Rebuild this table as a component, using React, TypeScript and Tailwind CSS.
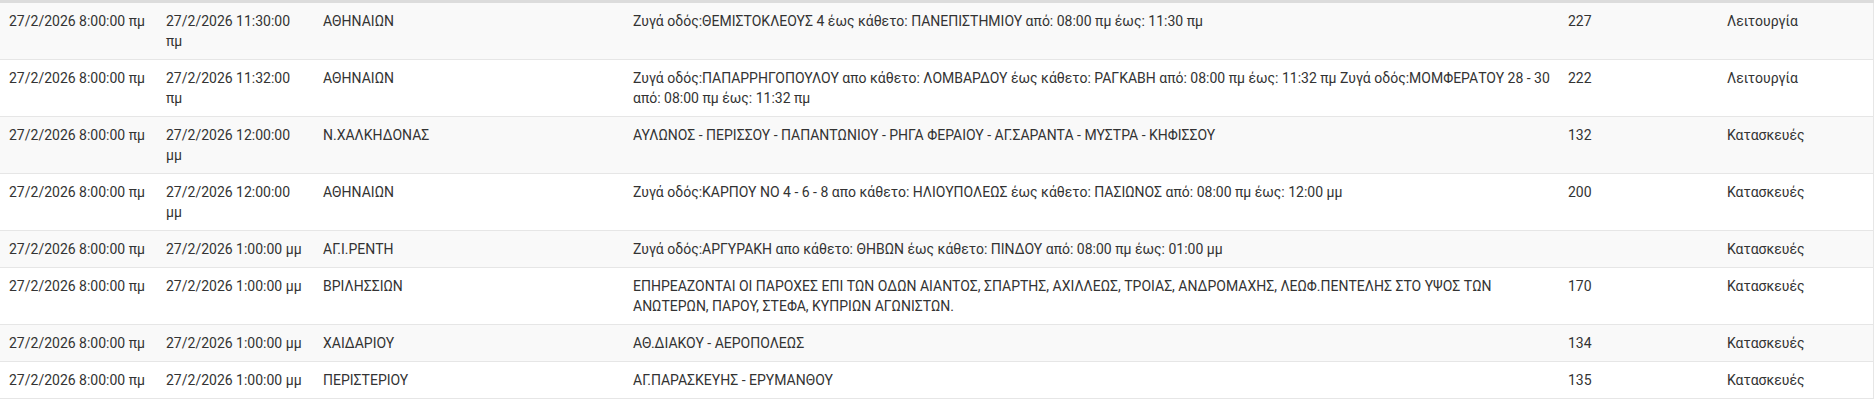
const rows = [
  {
    from: "27/2/2026 8:00:00 πμ",
    to: "27/2/2026 11:30:00 πμ",
    area: "ΑΘΗΝΑΙΩΝ",
    desc: "Ζυγά οδός:ΘΕΜΙΣΤΟΚΛΕΟΥΣ 4 έως κάθετο: ΠΑΝΕΠΙΣΤΗΜΙΟΥ από: 08:00 πμ έως: 11:30 πμ",
    num: "227",
    type: "Λειτουργία",
  },
  {
    from: "27/2/2026 8:00:00 πμ",
    to: "27/2/2026 11:32:00 πμ",
    area: "ΑΘΗΝΑΙΩΝ",
    desc: "Ζυγά οδός:ΠΑΠΑΡΡΗΓΟΠΟΥΛΟΥ απο κάθετο: ΛΟΜΒΑΡΔΟΥ έως κάθετο: ΡΑΓΚΑΒΗ από: 08:00 πμ έως: 11:32 πμ Ζυγά οδός:ΜΟΜΦΕΡΑΤΟΥ 28 - 30 από: 08:00 πμ έως: 11:32 πμ",
    num: "222",
    type: "Λειτουργία",
  },
  {
    from: "27/2/2026 8:00:00 πμ",
    to: "27/2/2026 12:00:00 μμ",
    area: "Ν.ΧΑΛΚΗΔΟΝΑΣ",
    desc: "ΑΥΛΩΝΟΣ - ΠΕΡΙΣΣΟΥ - ΠΑΠΑΝΤΩΝΙΟΥ - ΡΗΓΑ ΦΕΡΑΙΟΥ - ΑΓ.ΣΑΡΑΝΤΑ - ΜΥΣΤΡΑ - ΚΗΦΙΣΣΟΥ",
    num: "132",
    type: "Κατασκευές",
  },
  {
    from: "27/2/2026 8:00:00 πμ",
    to: "27/2/2026 12:00:00 μμ",
    area: "ΑΘΗΝΑΙΩΝ",
    desc: "Ζυγά οδός:ΚΑΡΠΟΥ ΝΟ 4 - 6 - 8 απο κάθετο: ΗΛΙΟΥΠΟΛΕΩΣ έως κάθετο: ΠΑΣΙΩΝΟΣ από: 08:00 πμ έως: 12:00 μμ",
    num: "200",
    type: "Κατασκευές",
  },
  {
    from: "27/2/2026 8:00:00 πμ",
    to: "27/2/2026 1:00:00 μμ",
    area: "ΑΓ.Ι.ΡΕΝΤΗ",
    desc: "Ζυγά οδός:ΑΡΓΥΡΑΚΗ απο κάθετο: ΘΗΒΩΝ έως κάθετο: ΠΙΝΔΟΥ από: 08:00 πμ έως: 01:00 μμ",
    num: "",
    type: "Κατασκευές",
  },
  {
    from: "27/2/2026 8:00:00 πμ",
    to: "27/2/2026 1:00:00 μμ",
    area: "ΒΡΙΛΗΣΣΙΩΝ",
    desc: "ΕΠΗΡΕΑΖΟΝΤΑΙ ΟΙ ΠΑΡΟΧΕΣ ΕΠΙ ΤΩΝ ΟΔΩΝ ΑΙΑΝΤΟΣ, ΣΠΑΡΤΗΣ, ΑΧΙΛΛΕΩΣ, ΤΡΟΙΑΣ, ΑΝΔΡΟΜΑΧΗΣ, ΛΕΩΦ.ΠΕΝΤΕΛΗΣ ΣΤΟ ΥΨΟΣ ΤΩΝ ΑΝΩΤΕΡΩΝ, ΠΑΡΟΥ, ΣΤΕΦΑ, ΚΥΠΡΙΩΝ ΑΓΩΝΙΣΤΩΝ.",
    num: "170",
    type: "Κατασκευές",
  },
  {
    from: "27/2/2026 8:00:00 πμ",
    to: "27/2/2026 1:00:00 μμ",
    area: "ΧΑΙΔΑΡΙΟΥ",
    desc: "ΑΘ.ΔΙΑΚΟΥ - ΑΕΡΟΠΟΛΕΩΣ",
    num: "134",
    type: "Κατασκευές",
  },
  {
    from: "27/2/2026 8:00:00 πμ",
    to: "27/2/2026 1:00:00 μμ",
    area: "ΠΕΡΙΣΤΕΡΙΟΥ",
    desc: "ΑΓ.ΠΑΡΑΣΚΕΥΗΣ - ΕΡΥΜΑΝΘΟΥ",
    num: "135",
    type: "Κατασκευές",
  },
];

export default function App() {
  return (
    <div className="w-[1875px] bg-white font-['Roboto',sans-serif] text-[14px] leading-5 text-[#333]">
      <table className="w-[1874px] table-fixed border-collapse border-t-[3px] border-r border-t-[#dcdcdc] border-r-[#e6e6e6]">
        <colgroup>
          <col className="w-[158px]" />
          <col className="w-[157px]" />
          <col className="w-[310px]" />
          <col className="w-[935px]" />
          <col className="w-[159px]" />
          <col />
        </colgroup>
        <tbody>
          {rows.map((r, i) => (
            <tr key={i} className={`border-b border-[#e6e6e6] align-top ${i % 2 === 0 ? "bg-[#f9f9f9]" : "bg-white"}`}>
              <td className="p-2 pl-[9px]">{r.from}</td>
              <td className="p-2">{r.to}</td>
              <td className="p-2">{r.area}</td>
              <td className="p-2">{r.desc}</td>
              <td className="p-2">{r.num}</td>
              <td className="p-2">{r.type}</td>
            </tr>
          ))}
        </tbody>
      </table>
    </div>
  );
}
